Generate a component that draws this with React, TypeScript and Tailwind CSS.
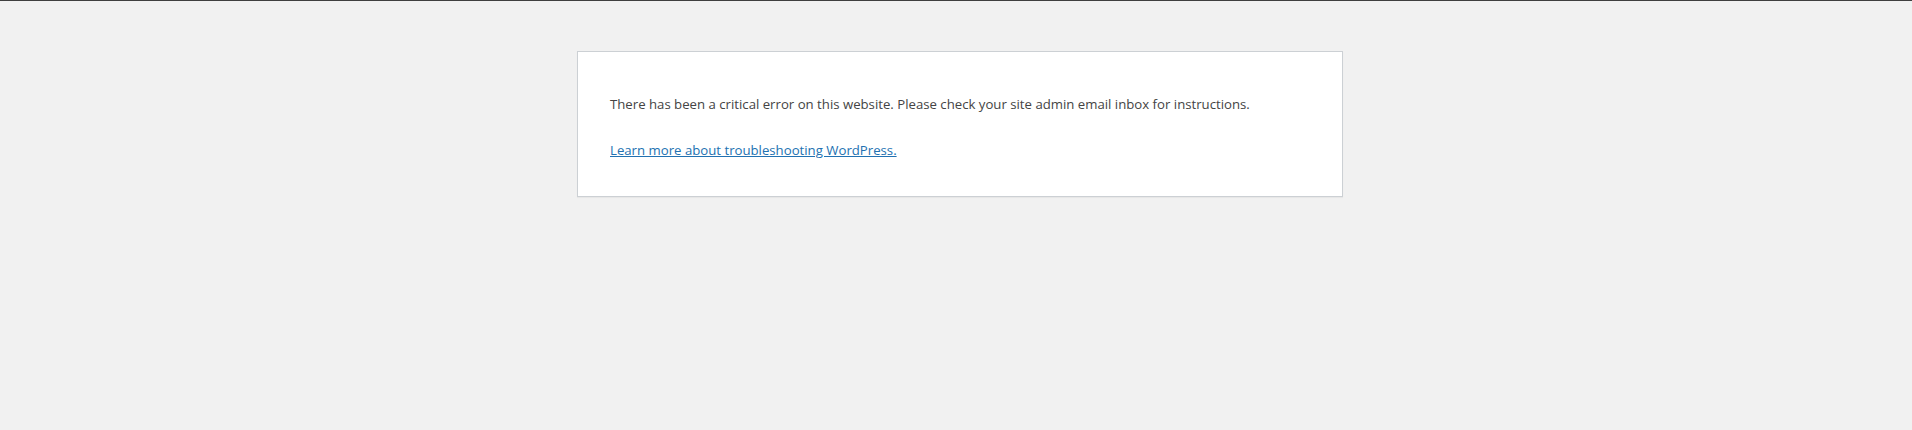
export default function App() {
  return (
    <div className="min-h-[430px] bg-[#f1f1f1] border-t border-[#3f3f3f] pt-[50px] pl-2">
      <div
        className="mx-auto max-w-[766px] bg-white border border-[#ccd0d4] px-8 py-4 text-[#444] shadow-[0_1px_1px_rgba(0,0,0,0.04)]"
        style={{ fontFamily: '"Open Sans", "Noto Sans", sans-serif' }}
      >
        <p className="text-[13.2px] leading-[21px] mt-[26px] mb-[25px]">
          There has been a critical error on this website. Please check your site admin email inbox for instructions.
        </p>
        <p className="text-[13.2px] leading-[21px] mb-[19px]">
          <a href="#" className="text-[#2271b1] underline">
            Learn more about troubleshooting WordPress.
          </a>
        </p>
      </div>
    </div>
  );
}
